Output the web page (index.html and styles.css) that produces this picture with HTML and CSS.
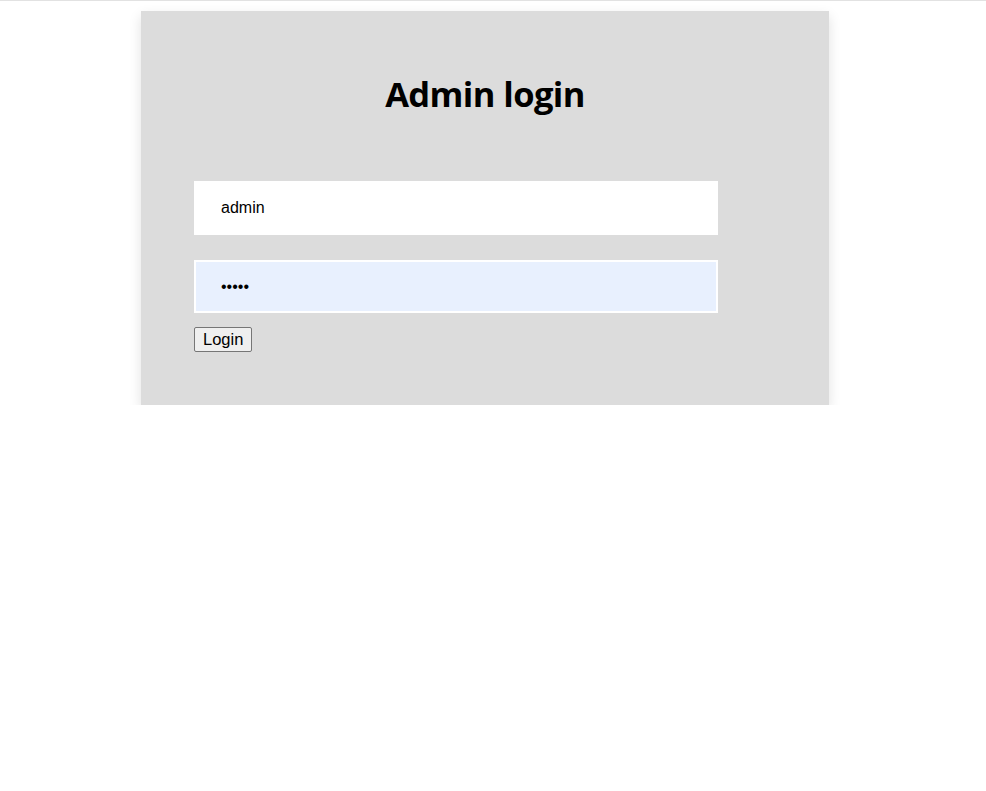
FILE: index.html
```html
<!DOCTYPE html>
<html>
<head>
<meta charset="utf-8">
<link rel="stylesheet" href="styles.css">
</head>
<body>
<div class="topline"></div>
<div class="page">
  <form class="card">
    <h1 class="title">Admin login</h1>
    <input class="field" type="text" value="admin">
    <input class="field field-filled" type="password" value="admin">
    <div class="actions"><button class="btn" type="button">Login</button></div>
  </form>
</div>
</body>
</html>
```

FILE: styles.css
```css
html, body {
  margin: 0;
  padding: 0;
  background: #ffffff;
}
.topline {
  height: 1px;
  background: #e2e2e2;
}
.page {
  padding: 10px 0 0 141px;
}
.card {
  width: 688px;
  box-sizing: border-box;
  background: #dcdcdc;
  padding: 63px 0 53px 53px;
  box-shadow: 0 5px 12px rgba(0, 0, 0, 0.12);
  display: flex;
  flex-direction: column;
  align-items: flex-start;
}
.title {
  align-self: stretch;
  margin: 0 53px 0 0;
  text-align: center;
  font-family: "Open Sans", sans-serif;
  font-weight: 700;
  font-size: 34.5px;
  line-height: 40px;
  letter-spacing: -0.6px;
  color: #000;
}
.field {
  width: 524px;
  height: 54px;
  box-sizing: border-box;
  border: 2px solid #ffffff;
  background: #ffffff;
  padding: 0 25px;
  font-family: "Liberation Sans", Arial, sans-serif;
  font-size: 16px;
  color: #000;
  outline: none;
  margin: 0;
}
.field:first-of-type {
  margin-top: 67px;
}
.field-filled {
  margin-top: 25px;
  height: 53px;
  background: #e8f0fe;
}
.actions {
  margin-top: 14px;
}
.btn {
  font-family: "Liberation Sans", Arial, sans-serif;
  font-size: 16.5px;
  height: 25px;
  padding: 0 8px;
  background: #efefef;
  border: 1px solid #767676;
  border-radius: 2px;
  color: #000;
}
```
